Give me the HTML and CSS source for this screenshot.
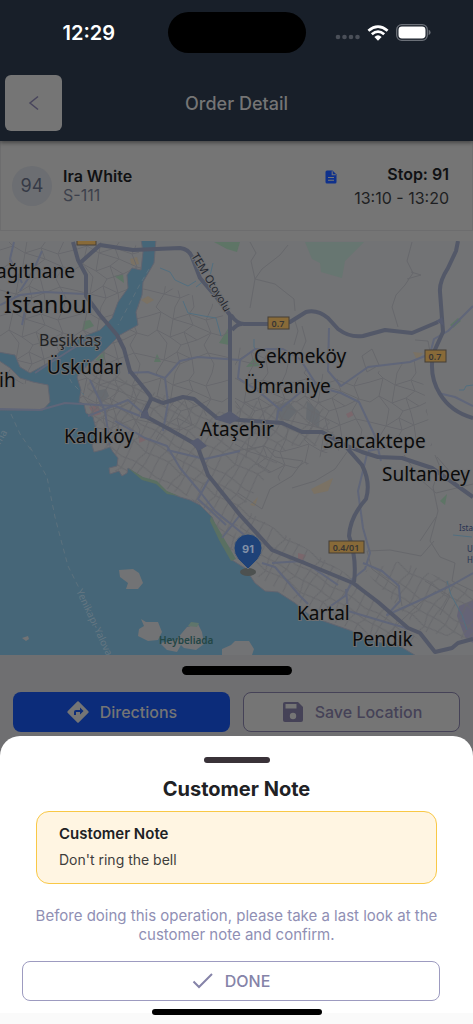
FILE: index.html
```html
<!DOCTYPE html>
<html lang="en">
<head>
    <meta charset="UTF-8">
    <meta name="viewport" content="width=device-width, initial-scale=1.0">
    <title>Order Detail</title>
    <link rel="stylesheet" href="styles.css">
</head>
<body>
    <header class="header">
        <div class="status-bar">
            <div class="time">12:29</div>
            <div class="island"></div>
            <div class="status-icons">
                <svg width="25" height="6" viewBox="0 0 25 6" fill="#4a4f58">
                    <circle cx="3" cy="3" r="2.3"/>
                    <circle cx="9.5" cy="3" r="2.3"/>
                    <circle cx="16" cy="3" r="2.3"/>
                    <circle cx="22.5" cy="3" r="2.3"/>
                </svg>
                <svg class="wifi" width="22" height="16" viewBox="0 0 22 16" fill="none" stroke="#fff" stroke-width="2.7">
                    <path d="M1.4 5.7 Q11 -2.5 20.6 5.7"/>
                    <path d="M4.8 9.3 Q11 3.9 17.2 9.3"/>
                    <path d="M7.4 12 Q11 8.6 14.6 12 L11 15.7 Z" fill="#fff" stroke="none"/>
                </svg>
                <svg width="35" height="17" viewBox="0 0 35 17">
                    <rect x="0.7" y="0.7" width="30.6" height="15.6" rx="5" fill="none" stroke="#6b7078" stroke-width="1.3"/>
                    <rect x="2.5" y="2.5" width="27" height="12" rx="3.4" fill="#fff"/>
                    <path d="M32.6 5.8 Q34.6 6.6 34.6 8.5 Q34.6 10.4 32.6 11.2 Z" fill="#6b7078"/>
                </svg>
            </div>
        </div>
        <div class="toolbar">
            <button class="back-btn" aria-label="Back">
                <svg width="12" height="16" viewBox="0 0 12 16" fill="none" stroke="#48455c" stroke-width="1.5">
                    <path d="M10 1.5 L2 8 L10 14.5"/>
                </svg>
            </button>
            <h1>Order Detail</h1>
        </div>
    </header>

    <section class="order">
        <div class="order-number">94</div>
        <div class="customer">
            <div class="name">Ira White</div>
            <div class="code">S-111</div>
        </div>
        <svg class="note-icon" width="12" height="14" viewBox="0 0 12 14">
            <path d="M2 0.5 H7.5 L11.5 4.5 V12 Q11.5 13.5 10 13.5 H2 Q0.5 13.5 0.5 12 V2 Q0.5 0.5 2 0.5 Z" fill="#0f318c"/>
            <path d="M7.2 1.2 V4.8 H10.8 M3 7.5 H9 M3 10.3 H9" fill="none" stroke="#757575" stroke-width="1.1"/>
        </svg>
        <div class="stop">
            <div class="name">Stop: 91</div>
            <div class="window">13:10 - 13:20</div>
        </div>
    </section>

    <svg class="map" viewBox="0 0 473 414">
        <defs>
            <pattern id="streets" width="74" height="66" patternUnits="userSpaceOnUse">
                <path class="street" d="M0 9 L13 5 L25 12 L41 7 L58 13 L74 9 M0 29 L9 23 L22 30 L36 25 L49 33 L63 26 L74 29 M0 49 L16 53 L29 45 L44 52 L60 46 L74 49
                    M8 0 L13 5 L9 23 L19 36 L16 53 L8 66 M27 0 L25 12 L22 30 L33 38 L29 45 L32 57 L27 66 M46 0 L41 7 L45 18 L36 25 L41 40 L44 52 L46 66 M64 0 L58 13 L63 26 L56 38 L60 46 L66 57 L64 66 M25 12 L45 18 L63 26 M33 38 L49 33 M16 53 L32 57 L44 52"/>
            </pattern>
            <pattern id="blocks" width="41" height="37" patternUnits="userSpaceOnUse" patternTransform="rotate(32)">
                <path class="street" d="M0 5 L12 7 L27 4 L41 5 M0 15 L18 17 L41 15 M0 26 L14 24 L31 28 L41 26 M5 0 L7 15 L4 26 L5 37 M16 0 L18 17 L14 24 L16 37 M28 0 L27 15 L31 28 L28 37 M36 0 L34 16 L36 37"/>
            </pattern>
        </defs>
        <rect width="473" height="414" fill="#727375"/>

        <!-- parks and built-up areas -->
        <path d="M305 1 L312 18 L320 22 L321 31 L342 37 L345 20 L364 1 Z" fill="#677671"/>
        <path d="M214 1 L240 1 L237 11 L227 8 Z M82 90 L84 80 L90 79 L94 85 Z M95 119 L105 110 L104 121 Z M154 121 L157 113 L161 121 Z M246 126 L255 116 L260 125 Z M219 102 L229 86 L229 104 Z M114 35 L123 33 L124 42 Z M440 260 L447 253 L445 264 Z M450 84 L458 77 L461 80 L453 87 Z" fill="#5e7566"/>
        <path d="M311 248 L333 237 L328 250 L314 253 Z M250 264 L258 256 L255 265 Z M141 59 L148 55 L154 59 L147 63 Z M130 18 L137 16 L139 23 L132 25 Z M413 111 L423 112 L417 119 Z" fill="#7b7264"/>
        <path d="M89 166 L98 164 L101 173 L94 175 Z M298 312 L306 314 L303 320 L298 318 Z M346 173 L352 170 L354 174 L348 177 Z M139 195 L146 199 L139 202 Z" fill="#7a676c"/>
        <path d="M276 165 L288 160 L297 170 L288 180 L277 177 Z M307 160 L320 171 L319 187 L306 178 Z M94 150 L106 148 L109 155 L102 162 Z" fill="#676b70"/>
        <path d="M459 365 L473 359 V402 L465 396 L457 375 Z" fill="#656477"/>

        <path fill="url(#streets)" d="M0 1 H135 L150 40 L210 60 L228 80 L228 160 L170 200 L90 190 L70 130 L0 150 Z M235 105 L345 140 L420 118 L432 205 L330 210 L280 240 L235 210 Z"/>
        <path fill="url(#blocks)" d="M85 120 L150 150 L235 175 L290 205 L240 270 L232 318 L190 256 L115 230 L90 180 Z M235 160 L320 160 L340 205 L240 205 Z M240 265 L350 335 L420 400 L396 404 L330 380 L240 325 Z M365 330 L400 320 L473 350 V400 L420 390 Z"/>

        <!-- country lanes -->
        <path class="street" d="M250 1 L256 12 L251 20 L255 38 L275 43 L294 58 L295 70 M288 4 L280 14 L262 28 L255 38 L250 67 M412 1 L407 20 L413 32 L405 44 L396 54 L392 66 L398 86 M407 38 L421 34 L411 31 M235 210 L265 205 L275 216 L303 220 L292 235 L270 248 L262 268 L238 252 M292 247 L315 240 L335 228 L347 211 M295 80 L298 90 L294 104 M302 85 L306 100 L300 114 M362 115 L372 108 L379 124 L367 131 Z M415 99 L428 100 L431 116 M435 214 L440 226 L433 246 L438 270 L430 300 L440 316 L455 322 L452 340 L473 350 M367 310 L372 328 L399 348 L402 365"/>
        <path class="street" d="M367 310 L390 309 L421 315 L434 300 M404 214 L420 238 L436 252 L473 243 M436 276 L420 300 M425 340 L450 355 L440 374 M437 216 L458 240 L467 230 M380 400 L420 362 L436 350"/>

        <path d="M-2 111 L15 114 L20 126 L30 132 L50 121 L63 107 L80 97 L100 89 L112 77 L118 61 L128 47 L127 34 L132 27 L141 29 L143 11 L141 -2 H156 L154 22 L143 41 L142 54 L136 71 L138 84 L120 94 L107 107 L97 116 L80 131 L77 136 L81 149 L79 161 L84 163 L86 172 L93 176 L95 184 L97 194 L92 204 L94 211 L102 209 L110 206 L113 211 L118 217 L117 225 L109 227 L110 233 L119 230 L122 235 L127 232 L128 227 L143 237 L157 241 L167 251 L180 256 L190 259 L200 264 L212 276 L220 297 L232 319 L240 324 L245 327 L255 342 L265 350 L278 351 L295 362 L312 376 L335 384 L355 391 L375 401 L398 404 L418 416 H-2 V169 L43 169 L50 161 L48 144 L33 141 L20 137 L10 127 L-2 119 Z" fill="#466678" stroke="#626570" stroke-width="1"/>
        <path d="M211 275 L222 294 L236 318 L231 320 L219 299 L210 280 Z M128 227 L143 236 L157 240 L167 250 L179 255 L167 253 L156 243 L142 239 Z" fill="#5a7062"/>

        <!-- islands -->
        <path d="M119 329 L133 328 L139 332 L143 342 L138 348 L126 348 L128 342 L120 336 Z M141 378 L146 381 L158 381 L162 391 L158 399 L148 400 L138 395 L139 388 L144 385 Z M160 402 L176 399 L187 386 L198 383 L202 391 L204 403 L196 409 L184 407 L181 404 L177 411 L167 409 Z M22 397 L28 395 L29 398 L26 400 Z M222 408 L231 404 L235 400 L249 400 L254 408 L252 414 H222 Z" fill="#727375"/>
        <path d="M188 385 L191 381 L199 382 L197 386 Z" fill="#5f756b"/>

        <path class="ferry" d="M30 206 L47 236 L55 276 L61 299 L68 325 L79 347 M11 173 L20 193 L31 209 M149 28 L139 45 L129 64 L118 84 M65 130 L72 142 L84 154"/>
        <path class="stream" d="M160 27 L170 31 L175 39 L188 45 L196 40 M183 60 L188 72 L204 75 L216 77 L221 95 M196 46 L210 35 L213 22 M254 98 L254 106 L260 113 M447 340 L451 354 L462 374 L467 389 M459 149 L464 149 L466 145 L473 144 M453 294 L472 296"/>

        <path class="minor" d="M14 1 L10 18 L22 42 M0 64 L20 54 L45 51 L84 53 M80 22 L99 6 M22 84 L27 60 M35 132 L50 122 L72 108 L95 95 M0 168 L40 169 L65 162 L82 163 L115 165 L140 175 M20 50 L33 30 L42 10"/>
        <path class="minor" d="M128 132 L148 131 L165 137 L180 120 L198 116 L240 119 L255 108 L283 108 L300 118 L318 146 L341 152 L359 161 L375 195 L381 220 M329 87 L328 130 L341 145 L368 126 L410 121 L430 113 L434 98 L448 90 L473 65 M165 137 L168 162 L163 190 M240 119 L238 137 L258 150 L282 170 M276 183 L278 170 L302 150 L315 143 M367 213 L358 250 L363 287 L370 312 L365 328 L351 339 M363 322 L382 330 L399 345 L400 360 L387 374 L425 357 L452 344 L473 332 M438 152 L455 156 L473 165"/>
        <path class="minor" d="M115 180 L145 197 L167 205 L180 227 L201 252 L215 270 L248 297 M210 236 L198 258 L226 284 M240 274 L222 297 M262 322 L275 326 L300 355 L308 363 M272 322 L303 320 L338 344 M351 342 L345 355 L322 371 M346 348 L348 370 L385 381 L420 391 M392 205 L368 210 M90 139 L105 170 L110 204 M88 175 L128 159 L143 172 M167 209 L205 218 L240 210"/>

        <!-- motorways -->
        <path class="road" d="M73 1 L78 19 L86 34 L86 55 L100 74 L117 94 L124 108 L130 130 L148 152 Q153 157 149 162 L143 174 L167 187 L197 204 L208 234 L240 274 L272 309 L302 321 L353 342 L378 361 L408 387 L420 392 L435 411 L452 407 L458 402 L473 398"/>
        <path class="road" d="M80 22 L100 4 L133 9 L180 7 Q189 8 192 16 L200 37 L217 57 L230 74 V174 M150 157 L163 162 L183 156 L194 158 L217 177 L240 179 L282 182 L302 191 L322 191 L345 204 L362 211 L378 216 L402 217 L432 227 L452 241 L473 256"/>
        <path class="road" d="M231 74 Q237 83 244 83 H278 L290 81 L306 71 Q317 68 328 77 L338 88 Q350 97 363 95 L385 89 L412 92 L438 81 M232 89 Q237 83 242 83 M458 0 L456 10 L448 27 Q439 41 440 51 L443 91 L433 113 Q429 136 440 153 Q451 171 473 177 M347 207 L362 224 Q371 242 366 258 Q350 276 349 295 Q357 318 354 341"/>
        <path d="M214 178 L230 170 L240 177 L230 183 Z M190 201 L198 197 L207 205 L198 210 Z M142 172 L147 168 L150 178 L140 177 Z M436 80 L442 76 L444 85 Z" fill="#565b6f"/>

        <text class="label road-name" transform="translate(191 15) rotate(59)">TEM Otoyolu</text>
        <text class="ferry-name" transform="translate(76 350) rotate(65)">Yenikapı-Yalova</text>
        <text class="ferry-name" transform="translate(0 204) rotate(-60)">ma</text>

        <g class="shields">
            <rect x="77" y="-8" width="19" height="12"/>
            <rect x="268" y="76" width="21" height="12"/>
            <rect x="425" y="109" width="21" height="12"/>
            <rect x="329" y="300" width="35" height="12"/>
            <text x="278" y="86">0.7</text>
            <text x="435" y="119">0.7</text>
            <text x="346" y="310">0.4/01</text>
        </g>

        <text class="label" x="-4" y="37">ağıthane</text>
        <text class="label city" x="4" y="72">İstanbul</text>
        <text class="label small" x="39" y="105">Beşiktaş</text>
        <text class="label" x="47" y="133">Üsküdar</text>
        <text class="label" x="-1" y="146">ih</text>
        <text class="label" x="64" y="202">Kadıköy</text>
        <text class="label" x="200" y="195">Ataşehir</text>
        <text class="label" x="254" y="122">Çekmeköy</text>
        <text class="label" x="244" y="152">Ümraniye</text>
        <text class="label" x="323" y="207">Sancaktepe</text>
        <text class="label" x="382" y="240">Sultanbey</text>
        <text class="label" x="297" y="379">Kartal</text>
        <text class="label" x="352" y="405">Pendik</text>
        <text class="island-name" x="159" y="403">Heybeliada</text>
        <text class="airport" x="459" y="290">Ista</text>
        <text class="airport" x="467" y="311">U</text>
        <text class="airport" x="467" y="322">H</text>

        <!-- stop marker -->
        <ellipse cx="248" cy="331" rx="8" ry="4" fill="#4d5150"/>
        <path d="M248 328 L238 318 Q234 313 234 307 A14 14 0 0 1 262 307 Q262 313 258 318 Z" fill="#1e4278" stroke="#696d73" stroke-width="1"/>
        <text class="marker" x="248" y="312">91</text>
    </svg>

    <section class="panel">
        <div class="panel-handle"></div>
        <div class="actions">
            <button class="directions-btn">
                <svg width="24" height="24" viewBox="0 0 24 24">
                    <path d="M22.4 11.300 L12.700 1.6 Q12 1 11.300 1.6 L1.6 11.300 Q1 12 1.6 12.700 L11.300 22.4 Q12 23 12.700 22.4 L22.4 12.700 Q23 12 22.4 11.300 Z" fill="#757575"/>
                    <path d="M8 15 V12 Q8 10 10 10 H14 V7.500 L17.500 11 L14 14.500 V12 H10 V15 Z" fill="#0c2c7a"/>
                </svg>
                Directions
            </button>
            <button class="save-btn">
                <svg width="24" height="24" viewBox="0 0 24 24">
                    <path d="M17 2 H4 Q2 2 2 4 V20 Q2 22 4 22 H20 Q22 22 22 20 V7 Z" fill="#454257"/>
                    <rect x="4.500" y="4" width="11" height="4.500" fill="#757575"/>
                    <circle cx="12" cy="16" r="3.200" fill="#757575"/>
                </svg>
                Save Location
            </button>
        </div>
    </section>

    <div class="sheet-wrap">
        <section class="sheet">
            <div class="sheet-handle"></div>
            <h2>Customer Note</h2>
            <div class="note">
                <h3>Customer Note</h3>
                <p>Don't ring the bell</p>
            </div>
            <p class="hint">Before doing this operation, please take a last look at the customer note and confirm.</p>
            <div class="confirm">
                <button class="done-btn">
                    <svg width="22" height="18" viewBox="0 0 22 18" fill="none" stroke="#8583a8" stroke-width="2">
                        <path d="M1.500 9.500 L7 15 L20 2"/>
                    </svg>
                    DONE
                </button>
            </div>
        </section>
    </div>
    <footer class="footer">
        <div class="home-indicator"></div>
    </footer>
</body>
</html>
```

FILE: styles.css
```css
* {
    box-sizing: border-box;
}
body {
    margin: 0;
    min-height: 100vh;
    display: flex;
    flex-direction: column;
    font-family: Inter, "Liberation Sans", sans-serif;
    background-color: #757575;
    color: #101113;
}
h1, h2, h3, p {
    margin: 0;
}
button {
    font-family: inherit;
    cursor: pointer;
}

/* header */
.header {
    position: relative;
    background-color: #181f29;
    padding-bottom: 10px;
    box-shadow: 0 2px 4px rgba(0, 0, 0, 0.4);
}
.status-bar {
    display: grid;
    grid-template-columns: 1fr 138px 1fr;
    align-items: center;
    height: 65px;
}
.time {
    padding-left: 10px;
    text-align: center;
    font-size: 20px;
    font-weight: 600;
    color: #fff;
}
.island {
    height: 41px;
    border-radius: 21px;
    background-color: #000;
}
.status-icons {
    display: flex;
    align-items: center;
    justify-content: center;
    gap: 7px;
    padding-right: 12px;
}
.status-icons svg:first-child {
    margin-top: 9px;
}
.toolbar {
    display: grid;
    grid-template-columns: 57px 1fr 57px;
    align-items: center;
    padding: 10px 5px 0;
}
.back-btn {
    display: flex;
    align-items: center;
    justify-content: center;
    height: 56px;
    border: none;
    border-radius: 6px;
    background-color: #757575;
}
.toolbar h1 {
    text-align: center;
    font-size: 18px;
    font-weight: 500;
    color: #757575;
}

/* order row */
.order {
    display: flex;
    align-items: center;
    height: 90px;
    margin-bottom: 10px;
    padding: 0 23px 0 11px;
    border: 1px solid #6d6d6e;
    border-top: none;
}
.order-number {
    display: flex;
    align-items: center;
    justify-content: center;
    width: 40px;
    height: 40px;
    border-radius: 50%;
    background-color: #6c6e72;
    font-size: 18px;
    color: #363a46;
}
.customer {
    flex: 1;
    padding-left: 11px;
    line-height: 19px;
}
.name {
    font-size: 16px;
    font-weight: 600;
}
.code {
    font-size: 16px;
    color: #3d414c;
}
.note-icon {
    margin-bottom: 18px;
}
.stop {
    width: 112px;
    text-align: right;
    line-height: 24px;
}
.window {
    font-size: 16px;
    color: #1e1f22;
}

/* map */
.map {
    display: block;
    width: 100%;
    font-family: "Noto Sans", sans-serif;
}
.street {
    fill: none;
    stroke: #67686c;
    stroke-width: 1;
}
.minor {
    fill: none;
    stroke: #606679;
    stroke-width: 2;
    stroke-linejoin: round;
}
.road {
    fill: none;
    stroke: #535868;
    stroke-width: 4;
    stroke-linejoin: round;
}
.ferry {
    fill: none;
    stroke: #5c717d;
    stroke-width: 1;
    stroke-dasharray: 5 4;
}
.stream {
    fill: none;
    stroke: #526f80;
    stroke-width: 1;
}
.label {
    font-size: 19px;
    fill: #0b0b0b;
    stroke: #6f7072;
    stroke-width: 2;
    paint-order: stroke;
}
.city {
    font-size: 23px;
}
.small {
    font-size: 16px;
    fill: #202122;
}
.road-name {
    font-size: 11px;
    fill: #24272f;
}
.ferry-name {
    font-size: 10px;
    fill: #657782;
}
.island-name {
    font-size: 10px;
    font-weight: 600;
    fill: #234645;
}
.airport {
    font-size: 8px;
    fill: #273252;
}
.shields rect {
    fill: #886a38;
    stroke: #443f37;
    stroke-width: 1;
}
.shields text {
    font-size: 9px;
    font-weight: 600;
    text-anchor: middle;
    fill: #383634;
}
.marker {
    font-family: Inter, sans-serif;
    font-size: 11px;
    font-weight: 700;
    text-anchor: middle;
    fill: #8190a7;
}

/* bottom panel */
.panel {
    background-color: #6f6f71;
    padding: 11px 13px 4px;
}
.panel-handle {
    width: 110px;
    height: 9px;
    margin: 0 auto 17px;
    border-radius: 5px;
    background-color: #000;
}
.actions {
    display: grid;
    grid-template-columns: 1fr 1fr;
    gap: 13px;
}
.actions button {
    display: flex;
    align-items: center;
    justify-content: center;
    gap: 10px;
    height: 40px;
    border-radius: 8px;
    font-size: 16px;
    font-weight: 500;
}
.directions-btn {
    border: none;
    background-color: #0c2c7a;
    color: #757575;
}
.save-btn {
    border: 1px solid #454257;
    background-color: #757575;
    color: #454257;
}

/* customer note sheet */
.sheet-wrap {
    flex: 1;
    background-color: #6f6f71;
}
.sheet {
    padding: 21px 22px 12px;
    border-radius: 20px 20px 0 0;
    background-color: #fff;
    text-align: center;
}
.sheet-handle {
    width: 66px;
    height: 6px;
    margin: 0 auto;
    border-radius: 3px;
    background-color: #393238;
}
.sheet h2 {
    margin: 12px 0 8px;
    font-size: 20px;
    font-weight: 700;
    line-height: 28px;
    color: #202124;
}
.note {
    margin: 0 14px;
    padding: 12px 22px;
    border: 1px solid #f9c846;
    border-radius: 13px;
    background-color: #fff5e2;
    text-align: left;
    font-size: 14px;
}
.note h3 {
    font-size: 15px;
    font-weight: 600;
    line-height: 20px;
    color: #202124;
}
.note p {
    margin-top: 5px;
    line-height: 22px;
    color: #3e3d3c;
}
.hint {
    margin: 22px 0 17px;
    font-size: 15px;
    line-height: 19px;
    color: #908fb4;
}
.confirm {
    padding-right: 11px;
}
.done-btn {
    display: flex;
    align-items: center;
    justify-content: center;
    gap: 11px;
    width: 100%;
    height: 40px;
    border: 1px solid #9d9bc0;
    border-radius: 8px;
    background-color: #fff;
    font-size: 16px;
    font-weight: 500;
    color: #8583a8;
}
.footer {
    height: 11px;
    background-color: #fafafa;
}
.home-indicator {
    position: relative;
    top: -4px;
    width: 170px;
    height: 6px;
    margin: 0 auto;
    border-radius: 3px;
    background-color: #000;
}
```
